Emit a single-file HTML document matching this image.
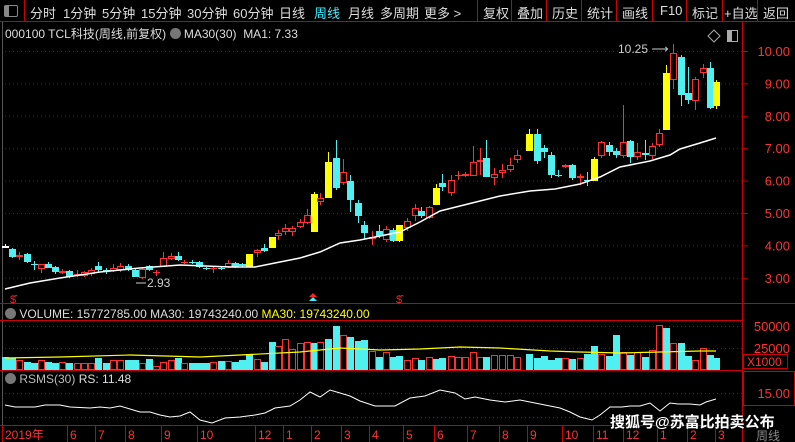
<!DOCTYPE html>
<html><head><meta charset="utf-8">
<style>
*{margin:0;padding:0}
body{width:795px;height:442px;background:#000;overflow:hidden;position:relative;font-family:"Liberation Sans","Noto Sans CJK SC",sans-serif;color:#ddd}
.t{position:absolute;white-space:nowrap}
#bar{position:absolute;left:0;top:0;width:795px;height:22px;border-bottom:1px solid #c00;box-sizing:border-box;background:#000}
#bar span{position:absolute;top:3px;font-size:13px;color:#ddd}
.sep{position:absolute;top:0;width:1px;height:22px;background:#c00}
svg{position:absolute;left:0;top:0}
</style></head><body>
<div id="bar">
<div style="position:absolute;left:4px;top:5px;width:12px;height:10px;border:1px solid #888;border-radius:2px"><div style="width:4px;height:10px;background:#888"></div></div>
<div class="sep" style="left:24px"></div>
<span style="left:30px">分时</span><span style="left:63px">1分钟</span><span style="left:102px">5分钟</span><span style="left:141px">15分钟</span><span style="left:187px">30分钟</span><span style="left:233px">60分钟</span><span style="left:279px">日线</span><span style="left:314px;color:#4ef">周线</span><span style="left:348px">月线</span><span style="left:380px">多周期</span><span style="left:424px">更多 &gt;</span>
<div class="sep" style="left:477px"></div><span style="left:483px">复权</span>
<div class="sep" style="left:511px"></div><span style="left:517px">叠加</span>
<div class="sep" style="left:546px"></div><span style="left:552px">历史</span>
<div class="sep" style="left:581px"></div><span style="left:587px">统计</span>
<div class="sep" style="left:616px"></div><span style="left:622px">画线</span>
<div class="sep" style="left:652px"></div><span style="left:660px">F10</span>
<div class="sep" style="left:686px"></div><span style="left:692px">标记</span>
<div class="sep" style="left:722px"></div><span style="left:724px">+自选</span>
<div class="sep" style="left:757px"></div><span style="left:763px">返回</span>
</div>
<div class="t" style="left:5px;top:25px;font-size:12px;color:#ddd">000100 TCL科技(周线,前复权) <span style="display:inline-block;width:11px;height:11px;border-radius:6px;background:#777;vertical-align:-1px"></span> MA30(30)&nbsp; MA1: 7.33</div>
<svg id="s" width="795" height="442"></svg>
<div class="t" style="left:5px;top:307px;font-size:12px"><span style="display:inline-block;width:11px;height:11px;border-radius:6px;background:#777;vertical-align:-1px"></span> VOLUME: 15772785.00 MA30: 19743240.00 <span style="color:#ff0">MA30: 19743240.00</span></div>
<div class="t" style="left:5px;top:372px;font-size:12px"><span style="display:inline-block;width:11px;height:11px;border-radius:6px;background:#777;vertical-align:-1px"></span> <span style="color:#bbb">RSMS(30)</span> RS: 11.48</div>
<div class="t" style="left:610px;top:411px;font-size:15px;font-weight:bold;color:#fff;letter-spacing:0px;text-shadow:0 0 2px #000">搜狐号@苏富比拍卖公布</div>
<script>
var s=document.getElementById('s'),h='';
function L(x1,y1,x2,y2,c,d){h+='<line x1="'+x1+'" y1="'+y1+'" x2="'+x2+'" y2="'+y2+'" stroke="'+c+'" stroke-width="1"'+(d?' stroke-dasharray="1 3"':'')+'/>';}
function R(x,y,w,hh,f,st){h+='<rect x="'+x+'" y="'+y+'" width="'+w+'" height="'+hh+'" fill="'+f+'"'+(st?' stroke="'+st+'"':'')+'/>';}
function T(x,y,t,c,sz,a){h+='<text x="'+x+'" y="'+y+'" fill="'+c+'" font-size="'+(sz||12)+'" font-family="Liberation Sans,Noto Sans CJK SC,sans-serif"'+(a?' text-anchor="'+a+'"':'')+'>'+t+'</text>';}
var prices=[10,9,8,7,6,5,4,3];
prices.forEach(function(p){var y=51+(10-p)*32.4;L(5,y+.5,742,y+.5,'#a00',1);L(742,y+.5,748,y+.5,'#c00');T(790,y+5,p.toFixed(2),'#f33',13,'end');});
L(742.5,22,742.5,442,'#c00');L(2.5,22,2.5,442,'#555');
L(0,303.5,795,303.5,'#c00');L(0,320.5,742,320.5,'#c00');
L(0,370.5,742,370.5,'#c00');L(0,425.5,742,425.5,'#c00');
L(5,326.5,742,326.5,'#a00',1);L(5,348.5,742,348.5,'#a00',1);
L(5,393.5,742,393.5,'#a00',1);L(5,417.5,742,417.5,'#a00',1);
T(790,331,'50000','#f33',13,'end');T(790,353,'25000','#f33',13,'end');
R(743.5,354.5,44,14,'none','#c00');T(747,366,'X1000','#f33',12);
R(743.5,371.5,51,34,'none','#c00');T(790,398,'15.00','#f33',13,'end');
var C=[[5,246,248,'x',244,248],[12,249,257,'c',248,258],[19,255,257,'r',252,260],[27,254,262,'c',253,263],[34,264,265,'x',261,270],[41,264,269,'r',264,273],[48,264,268,'c',262,268],[55,267,272,'c',266,274],[62,271,273,'r',269,274],[69,271,277,'c',270,278],[77,274,276,'r',270,277],[84,272,276,'r',271,277],[91,270,274,'r',268,276],[98,266,270,'c',262,272],[106,270,271,'x',268,274],[113,268,271,'r',264,272],[120,266,270,'r',263,272],[128,266,270,'c',264,271],[135,270,277,'c',268,277],[142,269,278,'r',268,279],[149,266,270,'c',265,271],[156,272,273,'x',270,276],[163,258,267,'r',252,267],[171,256,259,'r',253,260],[178,256,260,'c',252,261],[184,262,263,'x',260,264],[192,262,263,'x',260,264],[199,262,267,'c',261,268],[206,268,269,'x',267,270],[213,268,269,'x',266,273],[221,268,269,'x',266,270],[228,263,267,'r',260,268],[235,263,267,'c',262,268],[242,264,266,'c',263,267],[249,254,267,'y',254,267],[257,250,253,'r',249,257],[264,248,251,'c',244,252],[272,237,248,'y',237,248],[278,233,236,'r',230,240],[285,228,232,'r',224,235],[292,228,232,'r',226,236],[300,222,227,'r',219,228],[307,215,223,'r',209,224],[314,194,232,'y',192,232],[320,198,202,'r',193,205],[328,162,198,'y',152,198],[336,158,188,'c',140,190],[343,172,183,'r',159,185],[350,181,200,'c',175,212],[358,203,216,'c',200,223],[364,225,233,'c',221,239],[372,237,239,'r',231,245],[379,231,236,'c',225,238],[386,229,240,'r',226,242],[393,230,241,'c',228,242],[399,225,241,'y',225,242],[407,221,228,'r',218,231],[415,208,216,'r',204,221],[421,211,216,'c',207,218],[429,207,218,'r',206,219],[436,188,205,'y',184,205],[442,183,187,'c',174,191],[451,180,193,'r',175,196],[458,175,176,'x',171,180],[465,174,176,'r',172,177],[473,162,176,'r',146,176],[480,160,162,'r',148,175],[486,158,177,'c',140,177],[494,174,178,'r',168,185],[502,170,173,'r',164,178],[510,165,170,'r',158,172],[517,155,160,'r',150,163],[529,134,151,'y',129,151],[537,134,161,'c',129,164],[544,148,152,'c',145,158],[551,155,175,'c',152,178],[558,175,176,'x',170,177],[565,165,167,'r',164,168],[572,165,178,'c',164,180],[580,176,178,'r',174,185],[587,180,181,'x',172,186],[594,159,181,'y',157,181],[601,142,156,'r',141,158],[609,145,152,'c',142,156],[616,151,155,'c',148,158],[623,142,156,'r',105,158],[630,141,157,'c',140,163],[637,152,157,'r',143,160],[645,153,155,'c',140,160],[652,146,156,'r',143,159],[659,133,145,'r',129,147],[666,73,130,'y',65,130],[673,53,80,'r',44,89],[681,57,95,'c',55,106],[688,93,100,'c',67,104],[695,79,101,'r',77,110],[703,68,73,'r',64,78],[710,68,108,'c',62,109],[716,82,106,'y',80,109]];
var col={r:'#ff3030',c:'#50f0f0',y:'#ffff00',x:'#50f0f0'};
var tops=[357,358,360,362,363,360,362,363,362,363,363,363,363,358,363,360,360,360,360,363,359,366,362,360,358,363,363,363,363,362,361,361,362,360,355,359,362,342,346,339,349,343,342,343,342,339,326,335,337,341,340,351,357,352,357,356,360,358,360,357,359,358,356,357,357,352,357,357,355,355,355,357,354,358,356,360,358,358,359,358,354,346,354,356,335,352,355,352,357,350,325,328,343,343,356,360,348,355];
C.forEach(function(k,i){var x=k[0],c=col[k[3]];if(k[3]=='x'&&i%2)c='#ff3030';if(i==0)c='#fff';
L(x+.5,k[4],x+.5,k[5],c);
if(k[3]=='r')R(x-2.5,k[1]+.5,6,Math.max(1,k[2]-k[1]-1),'#000',c);
else R(x-3,k[1],7,Math.max(1,k[2]-k[1]),c);
var vt=tops[i]||358,vc=(k[3]=='r'||(k[3]=='x'&&i%2))?'#ff3030':'#50f0f0';
if(vc=='#ff3030')R(x-2.5,vt+.5,6,369-vt,'#000',vc);else R(x-3,vt,7,370-vt,vc);
});
var ma=[[5,289],[30,283],[60,278],[100,272],[140,268],[180,265],[230,267],[255,267],[280,262],[300,258],[320,252],[340,243],[360,240],[380,236],[400,232],[420,222],[440,211],[460,206],[480,201],[500,196],[530,191],[555,189],[580,184],[600,177],[620,167],[650,161],[670,155],[680,149],[700,143],[716,138]];
h+='<polyline points="'+ma.join(' ')+'" fill="none" stroke="#fff" stroke-width="1.5"/>';
var vm=[[5,358],[60,357],[130,355],[200,357],[240,355],[300,352],[340,348],[380,350],[420,349],[460,347],[500,348],[550,351],[580,352],[620,353],[700,351],[716,351]];
h+='<polyline points="'+vm.join(' ')+'" fill="none" stroke="#ff0" stroke-width="1.2"/>';
var rs=[[5,405],[15,407],[35,407],[45,405],[60,405],[70,407],[90,408],[100,407],[110,408],[120,406],[130,409],[140,412],[150,412],[160,415],[170,417],[180,416],[190,412],[200,420],[212,423],[225,418],[240,417],[255,415],[265,413],[275,408],[290,406],[300,400],[310,392],[320,397],[330,390],[340,393],[350,396],[360,401],[375,406],[395,406],[410,398],[425,396],[440,390],[455,393],[465,399],[475,397],[490,400],[505,402],[520,400],[540,404],[560,408],[570,412],[580,417],[592,420],[600,415],[610,407],[622,407],[630,406],[640,406],[650,403],[660,411],[670,403],[678,404],[690,404],[700,405],[706,402],[716,399]];
h+='<polyline points="'+rs.join(' ')+'" fill="none" stroke="#fff" stroke-width="1"/>';
T(10,303,'$̂','#f22',11);T(396,303,'$̂','#f22',11);
h+='<polygon points="313,293 317,297 309,297" fill="#f22"/><polygon points="313,297 317,301 309,301" fill="#4ef"/>';
T(618,53,'10.25 ⟶','#ccc',12);T(147,287,'2.93','#ccc',12);L(136,283,146,283,'#ccc');
h+='<polygon points="714,30 720,36 714,42 708,36" fill="none" stroke="#aaa"/>';R(727.5,30.5,10,11,'none','#aaa');R(728,31,4,10,'#aaa');
var M=[[5,'2019年'],[70,'6'],[98,'7'],[128,'8'],[164,'9'],[200,'10'],[258,'12'],[286,'1'],[314,'2'],[344,'3'],[372,'4'],[406,'5'],[437,'6'],[470,'7'],[502,'8'],[530,'9'],[565,'10'],[596,'11'],[626,'12'],[660,'1'],[690,'2'],[718,'3']];
M.forEach(function(m){L(m[0]-2.5,426,m[0]-2.5,442,'#c00');T(m[0],439,m[1],'#f33',12);});
T(756,440,'周线','#888',12);
s.innerHTML=h;
</script>
</body></html>
